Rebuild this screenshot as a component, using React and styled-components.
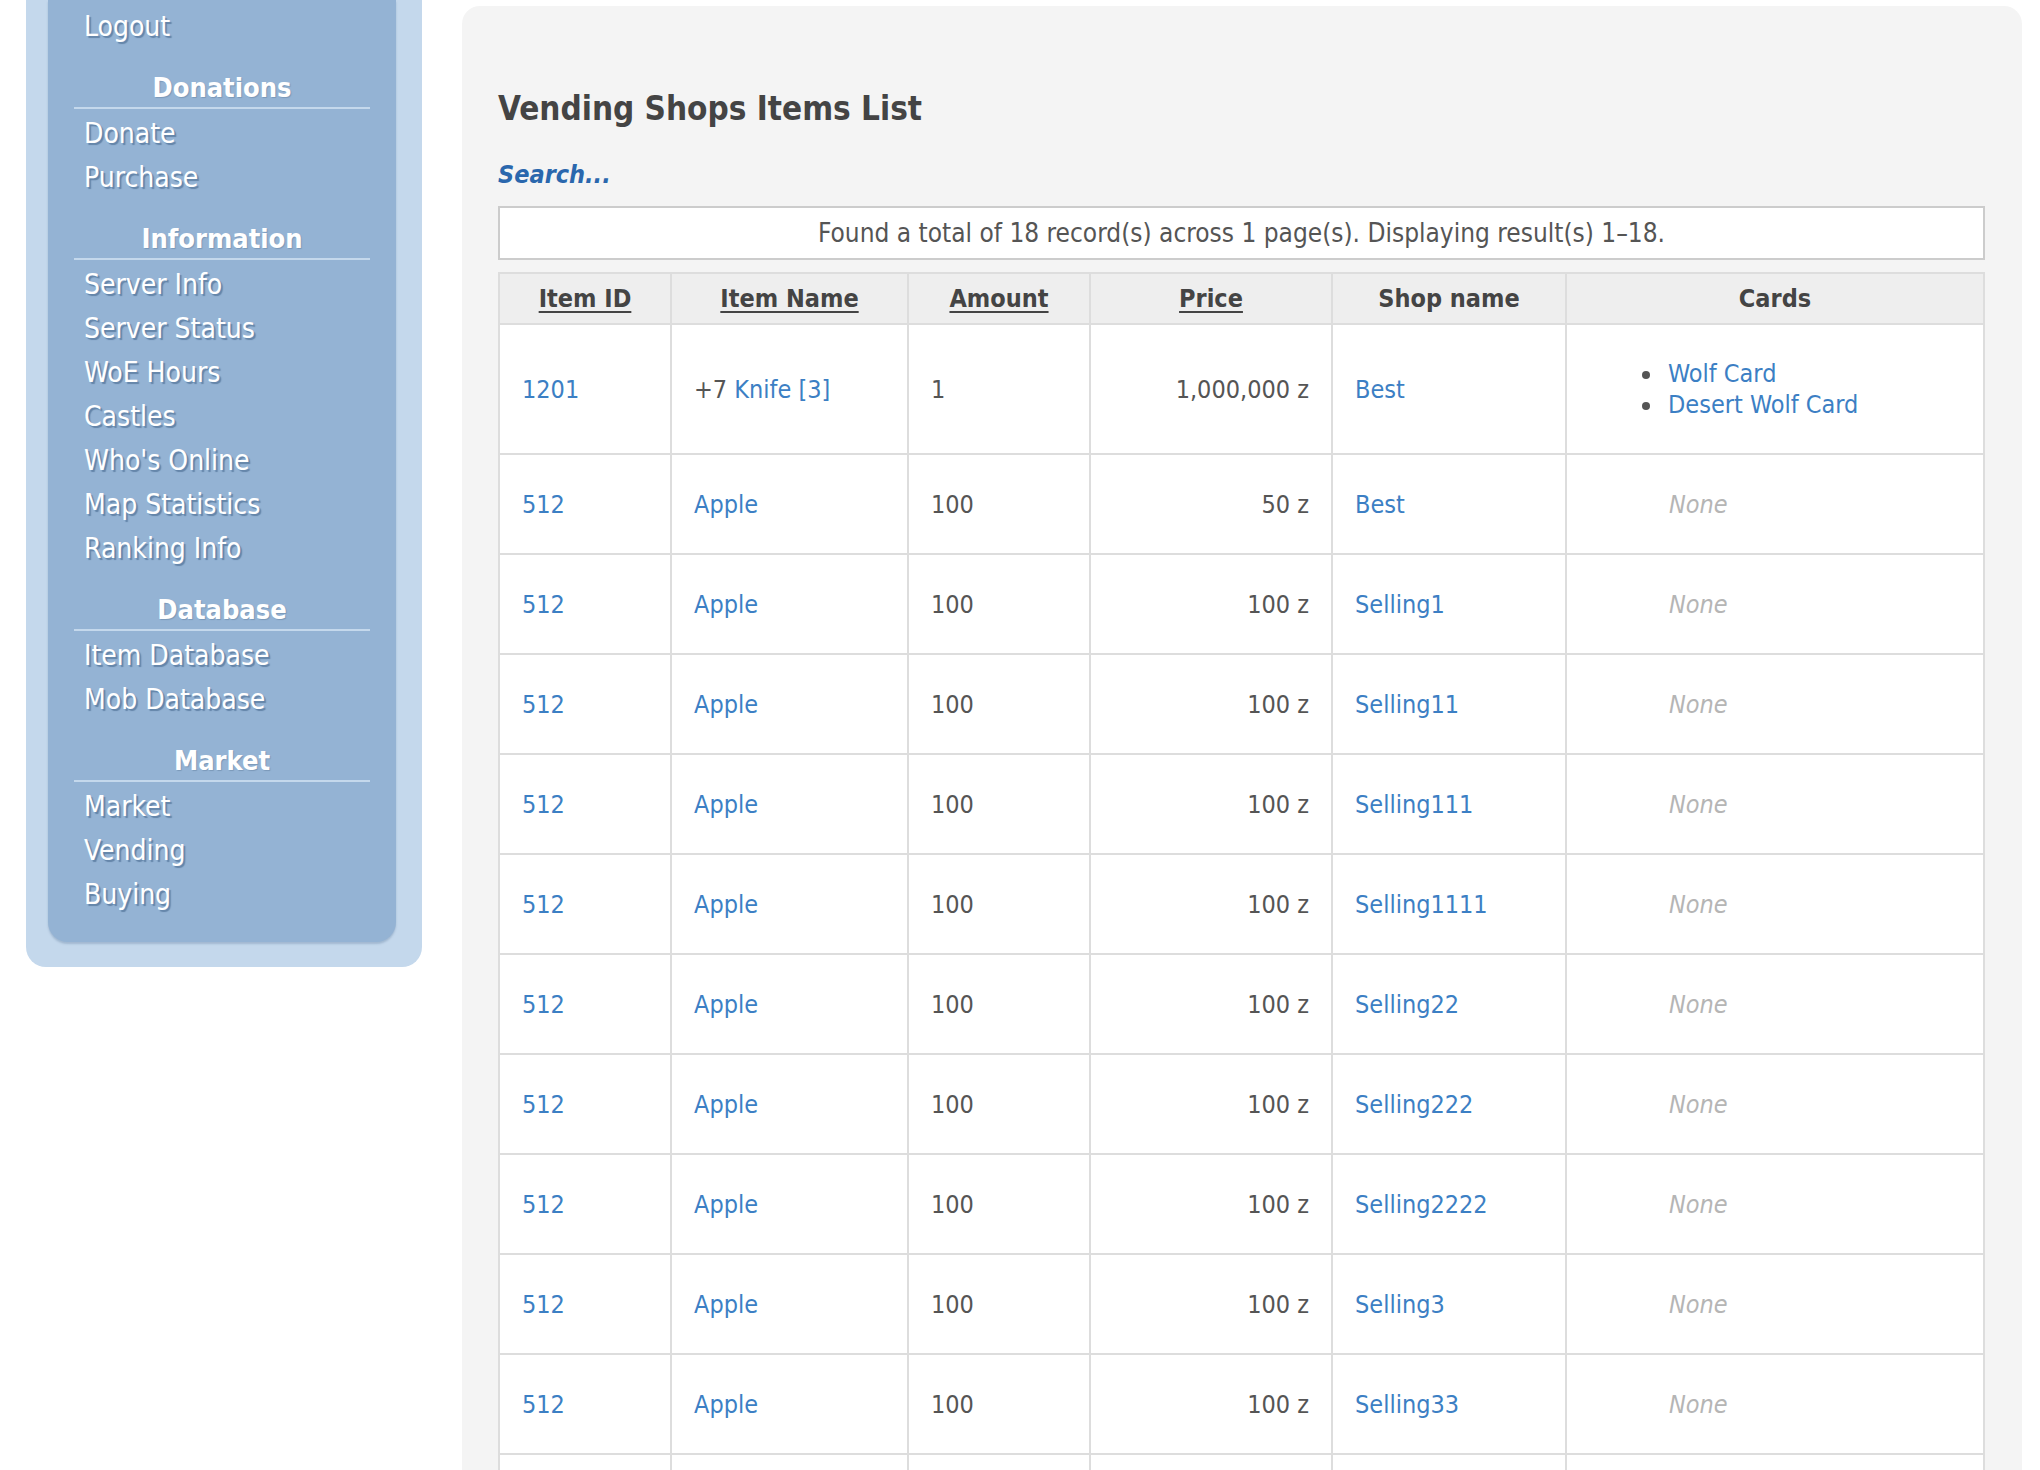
import React from "react";
import styled, { createGlobalStyle } from "styled-components";

const GlobalStyle = createGlobalStyle`
  body {
    margin: 0;
    background: #fff;
    font-family: "DejaVu Sans Condensed", "DejaVu Sans", sans-serif;
    font-stretch: semi-condensed;
  }
`;

const menu = [
  { title: null, items: ["Logout"] },
  { title: "Donations", items: ["Donate", "Purchase"] },
  {
    title: "Information",
    items: [
      "Server Info",
      "Server Status",
      "WoE Hours",
      "Castles",
      "Who's Online",
      "Map Statistics",
      "Ranking Info",
    ],
  },
  { title: "Database", items: ["Item Database", "Mob Database"] },
  { title: "Market", items: ["Market", "Vending", "Buying"] },
];

const shops = [
  ["50 z", "Best"],
  ["100 z", "Selling1"],
  ["100 z", "Selling11"],
  ["100 z", "Selling111"],
  ["100 z", "Selling1111"],
  ["100 z", "Selling22"],
  ["100 z", "Selling222"],
  ["100 z", "Selling2222"],
  ["100 z", "Selling3"],
  ["100 z", "Selling33"],
  ["100 z", "Selling333"],
  ["100 z", "Selling3333"],
  ["100 z", "Selling4"],
  ["100 z", "Selling44"],
  ["100 z", "Selling444"],
  ["100 z", "Selling4444"],
  ["100 z", "Selling5"],
];

export default function App() {
  return (
    <>
      <GlobalStyle />
      <Page>
        <SideOuter>
          <SideInner>
            {menu.map((group, i) => (
              <MenuGroup key={i}>
                {group.title && <GroupTitle>{group.title}</GroupTitle>}
                {group.items.map((item) => (
                  <MenuLink key={item}>{item}</MenuLink>
                ))}
              </MenuGroup>
            ))}
          </SideInner>
        </SideOuter>

        <Main>
          <Title>Vending Shops Items List</Title>
          <SearchLink>Search...</SearchLink>
          <InfoBox>
            Found a total of 18 record(s) across 1 page(s). Displaying
            result(s) 1–18.
          </InfoBox>
          <Table>
            <colgroup>
              <col style={{ width: 172 }} />
              <col style={{ width: 237 }} />
              <col style={{ width: 182 }} />
              <col style={{ width: 242 }} />
              <col style={{ width: 234 }} />
              <col />
            </colgroup>
            <thead>
              <tr>
                <Th $sortable>Item ID</Th>
                <Th $sortable>Item Name</Th>
                <Th $sortable>Amount</Th>
                <Th $sortable>Price</Th>
                <Th>Shop name</Th>
                <Th>Cards</Th>
              </tr>
            </thead>
            <tbody>
              <Row $tall>
                <Td>
                  <Link>1201</Link>
                </Td>
                <Td>
                  +7 <Link>Knife [3]</Link>
                </Td>
                <Td>1</Td>
                <Td $right>1,000,000 z</Td>
                <Td>
                  <Link>Best</Link>
                </Td>
                <CardsCell>
                  <CardList>
                    <li>
                      <Link>Wolf Card</Link>
                    </li>
                    <li>
                      <Link>Desert Wolf Card</Link>
                    </li>
                  </CardList>
                </CardsCell>
              </Row>
              {shops.map(([price, shop], i) => (
                <Row key={i}>
                  <Td>
                    <Link>512</Link>
                  </Td>
                  <Td>
                    <Link>Apple</Link>
                  </Td>
                  <Td>100</Td>
                  <Td $right>{price}</Td>
                  <Td>
                    <Link>{shop}</Link>
                  </Td>
                  <CardsCell>
                    <NoneText>None</NoneText>
                  </CardsCell>
                </Row>
              ))}
            </tbody>
          </Table>
        </Main>
      </Page>
    </>
  );
}

const Page = styled.div`
  display: flex;
  align-items: flex-start;
  padding-left: 26px;
  gap: 40px;
`;

const SideOuter = styled.div`
  flex: 0 0 396px;
  box-sizing: border-box;
  background: #c4d8ec;
  padding: 0 26px 25px 22px;
  border-radius: 0 0 20px 20px;
`;

const SideInner = styled.div`
  background: #94b3d4;
  border-radius: 0 0 20px 20px;
  padding: 5px 26px 25px 26px;
  box-shadow: 0 2px 2px rgba(60, 90, 130, 0.25);
`;

const MenuGroup = styled.div`
  display: flex;
  flex-direction: column;

  & + & {
    margin-top: 24px;
  }
`;

const GroupTitle = styled.div`
  color: #fff;
  font-weight: bold;
  font-size: 27px;
  line-height: 30px;
  text-align: center;
  padding-bottom: 4px;
  border-bottom: 2px solid #c4d8ec;
  margin-bottom: 3px;
  text-shadow: 1px 1px 1px #7a98b8;
`;

const MenuLink = styled.a`
  display: block;
  padding-left: 10px;
  color: #fff;
  font-size: 28px;
  line-height: 44px;
  text-shadow: 2px 2px 1px #6384a8;
  cursor: pointer;
`;

const Main = styled.div`
  flex: 0 0 1560px;
  box-sizing: border-box;
  margin-top: 6px;
  background: #f4f4f4;
  border-radius: 18px 18px 0 0;
  padding: 83px 37px 40px 36px;
`;

const Title = styled.h2`
  margin: 0;
  color: #444;
  font-size: 33px;
  line-height: 40px;
  font-weight: bold;
`;

const SearchLink = styled.a`
  display: block;
  margin-top: 31px;
  color: #2a67ad;
  font-size: 25px;
  line-height: 30px;
  font-weight: bold;
  font-style: italic;
  cursor: pointer;
`;

const InfoBox = styled.div`
  margin-top: 16px;
  background: #fff;
  border: 2px solid #ccc;
  height: 50px;
  line-height: 50px;
  text-align: center;
  color: #555;
  font-size: 26px;
`;

const Table = styled.table`
  margin-top: 12px;
  width: 100%;
  border-collapse: collapse;
  table-layout: fixed;
  background: #fff;
  font-size: 25px;
  color: #555;
`;

const Th = styled.th`
  background: #eee;
  border: 2px solid #ddd;
  height: 49px;
  padding: 0 20px;
  color: #444;
  font-weight: bold;
  text-align: center;
  text-decoration: ${(p) => (p.$sortable ? "underline" : "none")};
  text-underline-offset: 4px;
  text-decoration-thickness: 2px;
`;

const Row = styled.tr`
  height: ${(p) => (p.$tall ? "130px" : "100px")};
`;

const Td = styled.td`
  border: 2px solid #ddd;
  padding: 0 22px;
  vertical-align: middle;
  text-align: ${(p) => (p.$right ? "right" : "left")};
`;

const CardsCell = styled.td`
  border: 2px solid #ddd;
  padding: 0 22px 0 97px;
  vertical-align: middle;
`;

const CardList = styled.ul`
  margin: 0;
  padding: 0;
  list-style: disc;
  line-height: 31px;

  li {
    padding-left: 4px;
  }

  li::marker {
    color: #555;
  }
`;

const Link = styled.a`
  color: #3c7fc4;
  cursor: pointer;
`;

const NoneText = styled.span`
  display: inline-block;
  margin-left: 5px;
  color: #b5b5b5;
  font-style: italic;
`;
